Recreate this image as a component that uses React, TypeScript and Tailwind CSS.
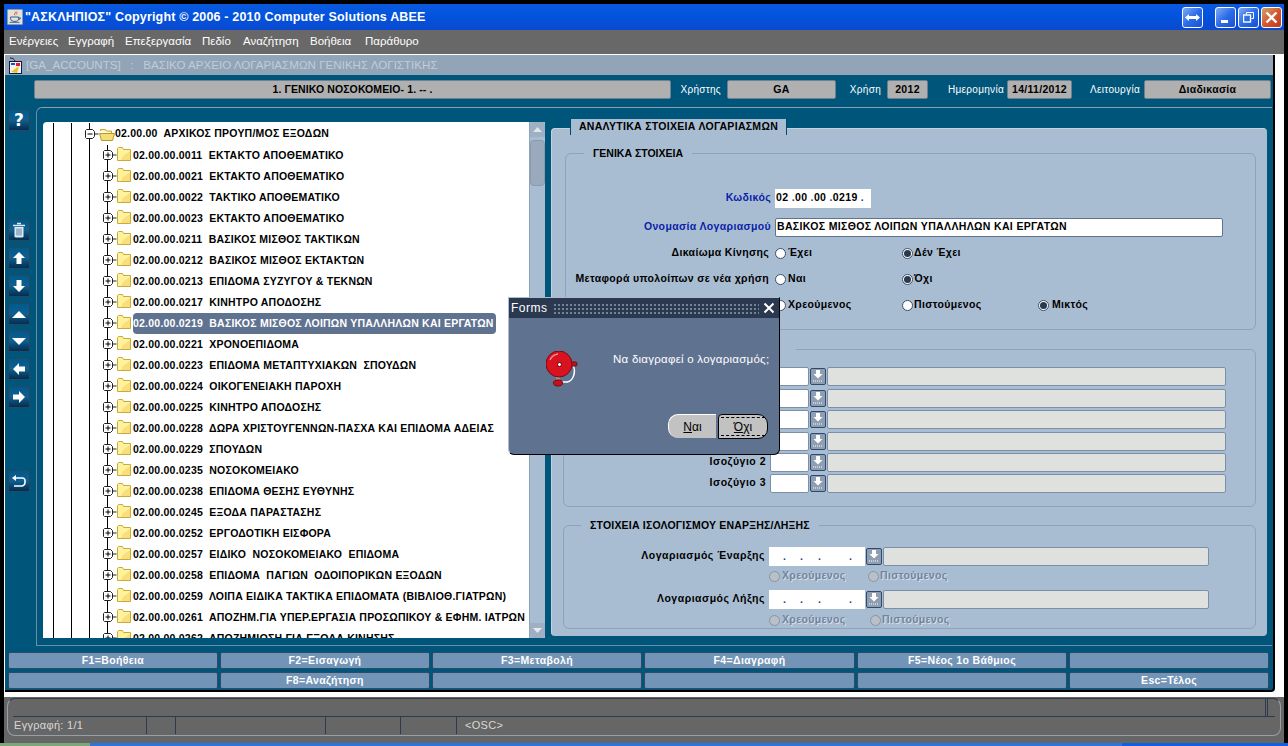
import React from "react";

const treeRows = [
  "02.00.00.0011  ΕΚΤΑΚΤΟ ΑΠΟΘΕΜΑΤΙΚΟ",
  "02.00.00.0021  ΕΚΤΑΚΤΟ ΑΠΟΘΕΜΑΤΙΚΟ",
  "02.00.00.0022  ΤΑΚΤΙΚΟ ΑΠΟΘΕΜΑΤΙΚΟ",
  "02.00.00.0023  ΕΚΤΑΚΤΟ ΑΠΟΘΕΜΑΤΙΚΟ",
  "02.00.00.0211  ΒΑΣΙΚΟΣ ΜΙΣΘΟΣ ΤΑΚΤΙΚΩΝ",
  "02.00.00.0212  ΒΑΣΙΚΟΣ ΜΙΣΘΟΣ ΕΚΤΑΚΤΩΝ",
  "02.00.00.0213  ΕΠΙΔΟΜΑ ΣΥΖΥΓΟΥ & ΤΕΚΝΩΝ",
  "02.00.00.0217  ΚΙΝΗΤΡΟ ΑΠΟΔΟΣΗΣ",
  "02.00.00.0219  ΒΑΣΙΚΟΣ ΜΙΣΘΟΣ ΛΟΙΠΩΝ ΥΠΑΛΛΗΛΩΝ ΚΑΙ ΕΡΓΑΤΩΝ",
  "02.00.00.0221  ΧΡΟΝΟΕΠΙΔΟΜΑ",
  "02.00.00.0223  ΕΠΙΔΟΜΑ ΜΕΤΑΠΤΥΧΙΑΚΩΝ  ΣΠΟΥΔΩΝ",
  "02.00.00.0224  ΟΙΚΟΓΕΝΕΙΑΚΗ ΠΑΡΟΧΗ",
  "02.00.00.0225  ΚΙΝΗΤΡΟ ΑΠΟΔΟΣΗΣ",
  "02.00.00.0228  ΔΩΡΑ ΧΡΙΣΤΟΥΓΕΝΝΩΝ-ΠΑΣΧΑ ΚΑΙ ΕΠΙΔΟΜΑ ΑΔΕΙΑΣ",
  "02.00.00.0229  ΣΠΟΥΔΩΝ",
  "02.00.00.0235  ΝΟΣΟΚΟΜΕΙΑΚΟ",
  "02.00.00.0238  ΕΠΙΔΟΜΑ ΘΕΣΗΣ ΕΥΘΥΝΗΣ",
  "02.00.00.0245  ΕΞΟΔΑ ΠΑΡΑΣΤΑΣΗΣ",
  "02.00.00.0252  ΕΡΓΟΔΟΤΙΚΗ ΕΙΣΦΟΡΑ",
  "02.00.00.0257  ΕΙΔΙΚΟ  ΝΟΣΟΚΟΜΕΙΑΚΟ  ΕΠΙΔΟΜΑ",
  "02.00.00.0258  ΕΠΙΔΟΜΑ  ΠΑΓΙΩΝ  ΟΔΟΙΠΟΡΙΚΩΝ ΕΞΟΔΩΝ",
  "02.00.00.0259  ΛΟΙΠΑ ΕΙΔΙΚΑ ΤΑΚΤΙΚΑ ΕΠΙΔΟΜΑΤΑ (ΒΙΒΛΙΟΘ.ΓΙΑΤΡΩΝ)",
  "02.00.00.0261  ΑΠΟΖΗΜ.ΓΙΑ ΥΠΕΡ.ΕΡΓΑΣΙΑ ΠΡΟΣΩΠΙΚΟΥ & ΕΦΗΜ. ΙΑΤΡΩΝ",
  "02.00.00.0262  ΑΠΟΖΗΜΙΩΣΗ ΓΙΑ ΕΞΟΔΑ ΚΙΝΗΣΗΣ",
];

const fkeys = [
  ["F1=Βοήθεια", "w-[210px]"],
  ["F2=Εισαγωγή", "w-[210px]"],
  ["F3=Μεταβολή", "w-[210px]"],
  ["F4=Διαγραφή", "w-[211px]"],
  ["F5=Νέος 1ο Βάθμιος", "w-[210px]"],
  ["", "w-[200px]"],
  ["", "w-[210px]"],
  ["F8=Αναζήτηση", "w-[210px]"],
  ["", "w-[210px]"],
  ["", "w-[211px]"],
  ["", "w-[210px]"],
  ["Esc=Τέλος", "w-[200px]"],
];

const Expander = ({ open }: { open?: boolean }) => (
  <svg width="14" height="11" viewBox="0 0 14 11" className="shrink-0 -ml-[5px]">
    <path d="M1.500 .5h6l2 2v5l-2 2h-6l-1-1v-7z" fill="#fff" stroke="#222" />
    <path d="M2.500 5h5" stroke="#000" />
    {!open && <path d="M5 2.500v5" stroke="#000" />}
    <path d="M9.500 5h4" stroke="#222" />
  </svg>
);

const Folder = ({ open }: { open?: boolean }) =>
  open ? (
    <svg width="16" height="13" viewBox="0 0 16 13" className="shrink-0">
      <path d="M1.500 3V1.500h5l1 1.500h5v2" fill="#fff3a8" stroke="#c4a635" />
      <path d="M.5 5.500h15l-2 7h-11z" fill="#f5de78" stroke="#b8982c" />
    </svg>
  ) : (
    <svg width="14" height="14" viewBox="0 0 14 14" className="shrink-0">
      <path d="M.5 3V1.500l1-1h4l1 2h7v11H.5z" fill="#fff29c" stroke="#c9ab3c" />
      <path d="M6 9l7-5v9H4z" fill="#f6d66e" opacity=".7" />
    </svg>
  );

const Guide = () => <div className="w-[18px] h-full border-l border-black shrink-0" />;

const TreePanel = () => (
  <div className="w-[502px] h-[516px] bg-white flex overflow-hidden rounded-tl-sm font-['Liberation_Sans',sans-serif] font-bold text-[10.5px] tracking-[0.22px] text-black">
    <div className="w-[486px] overflow-hidden pl-[10px] pt-[1px]">
      <div className="flex items-center h-[22px]">
        <Guide />
        <Guide />
        <div className="w-0 h-full border-l border-black" />
        <Expander open />
        <Folder open />
        <span className="whitespace-pre">02.00.00  ΑΡΧΙΚΟΣ ΠΡΟΥΠ/ΜΟΣ ΕΞΟΔΩΝ</span>
      </div>
      {treeRows.map((row) => {
        const selected = row.startsWith("02.00.00.0219");
        return (
          <div key={row} className="flex items-center h-[21px]">
            <Guide />
            <Guide />
            <Guide />
            <div className="w-0 h-full border-l border-black" />
            <Expander />
            <div className="-mt-[3px]"><Folder /></div>
            <span
              className={
                selected
                  ? "ml-[2px] h-[21px] pr-[2px] flex items-center whitespace-pre bg-[#5f7391] text-white rounded-sm"
                  : "ml-[2px] whitespace-pre"
              }
            >
              {row}
            </span>
          </div>
        );
      })}
    </div>
    {/* scrollbar */}
    <div className="w-[16px] flex flex-col bg-[#a9bdd2] border-l border-[#8fa3ba]">
      <div className="h-[15px] bg-[#9fb0c4] rounded-t-sm flex items-center justify-center">
        <svg width="9" height="5" viewBox="0 0 9 5"><path d="M4.500 0L9 5H0z" fill="#dfe6ee" /></svg>
      </div>
      <div className="h-[46px] mt-[3px] bg-[#9aa9bb] rounded-sm border border-[#8a9aad]" />
      <div className="flex-1" />
      <div className="h-[15px] bg-[#9fb0c4] rounded-b-sm flex items-center justify-center">
        <svg width="9" height="5" viewBox="0 0 9 5"><path d="M0 0h9L4.500 5z" fill="#e6ebf1" /></svg>
      </div>
    </div>
  </div>
);

const Radio = ({ on, disabled }: { on?: boolean; disabled?: boolean }) => (
  <span
    className={
      disabled
        ? "w-[11px] h-[11px] rounded-full shrink-0 bg-[#b9c0c8] border border-[#8795a6]"
        : "w-[11px] h-[11px] rounded-full shrink-0 bg-white border border-[#3c4f68] flex items-center justify-center"
    }
  >
    {on && <span className="w-[7px] h-[7px] rounded-full bg-[#2a3850]" />}
  </span>
);

const Lov = () => (
  <div className="w-[16px] h-[17px] shrink-0 bg-[#8f9fb1] border border-[#2e4a70] rounded-[2px] flex items-center justify-center">
    <svg width="10" height="12" viewBox="0 0 10 12">
      <path d="M3 0h4v4h2.500L5 8.500.5 4H3z" fill="#fff" />
      <path d="M0 11h10" stroke="#fff" strokeDasharray="1 1" />
    </svg>
  </div>
);

const LovRow = ({ label }: { label?: string }) => (
  <div className="flex items-center h-[20px]">
    <span className="w-[202px] text-right tracking-[0.5px]">{label}</span>
    <div className="ml-[4px] w-[39px] h-[19px] bg-white border border-[#7b90a8] rounded-[2px]" />
    <div className="ml-[1px]"><Lov /></div>
    <div className="ml-[1px] w-[399px] h-[19px] bg-[#dfe1de] border border-[#7b90a8] rounded-[2px]" />
  </div>
);

const DottedField = () => (
  <div className="ml-[4px] w-[96px] h-[19px] bg-white text-[#24408a] relative">
    <span className="absolute left-[14px] top-[2px]">.</span>
    <span className="absolute left-[31px] top-[2px]">.</span>
    <span className="absolute left-[49px] top-[2px]">.</span>
    <span className="absolute left-[80px] top-[2px]">.</span>
  </div>
);

const BalanceRow = ({ label }: { label: string }) => (
  <div className="flex items-center h-[20px]">
    <span className="w-[201px] text-right tracking-[0.5px]">{label}</span>
    <DottedField />
    <div className="ml-[1px]"><Lov /></div>
    <div className="ml-[1px] w-[326px] h-[19px] bg-[#dfe1de] border border-[#7b90a8] rounded-[2px]" />
  </div>
);

const DisabledRadios = ({ second }: { second: string }) => (
  <div className="flex items-center h-[14px] text-[#71859d] [text-shadow:1px_1px_0_#d7dfe8]">
    <div className="ml-[205px] w-[99px] flex items-center gap-[2px]">
      <Radio disabled />
      <span>Χρεούμενος</span>
    </div>
    <div className={second + " flex items-center gap-[1px]"}>
      <Radio disabled />
      <span>Πιστούμενος</span>
    </div>
  </div>
);

const FormPanel = () => (
  <div className="w-[716px] h-[508px] bg-[#a9bdd2] rounded-sm border-t border-l border-[#c4d2e0] font-['Liberation_Sans',sans-serif] font-bold text-[10.5px] tracking-[0.35px] text-black pl-[13px] pr-[11px]">
    <fieldset className="mt-[17px] h-[184px] border border-[#8ea2b9] rounded-md">
      <legend className="ml-[18px] px-[9px] h-[14px] leading-[14px] tracking-[0px]">ΓΕΝΙΚΑ ΣΤΟΙΧΕΙΑ</legend>
      <div className="flex flex-col mt-[28px]">
        <div className="flex items-center h-[20px]">
          <span className="w-[205px] text-right text-[#0a1fa8]">Κωδικός</span>
          <div className="ml-[4px] w-[96px] h-[19px] bg-white flex items-center pl-[1px] whitespace-pre">
            02<span className="text-[#24408a]"> .</span>00<span className="text-[#24408a]"> .</span>00<span className="text-[#24408a]"> .</span>0219<span className="text-[#24408a]"> .</span>
          </div>
        </div>
        <div className="flex items-center h-[20px] mt-[9px]">
          <span className="w-[205px] text-right text-[#0a1fa8]">Ονομασία Λογαριασμού</span>
          <div className="ml-[4px] w-[448px] h-[19px] bg-white border border-[#5f7391] rounded-[2px] flex items-center pl-[1px]">
            ΒΑΣΙΚΟΣ ΜΙΣΘΟΣ ΛΟΙΠΩΝ ΥΠΑΛΛΗΛΩΝ ΚΑΙ ΕΡΓΑΤΩΝ
          </div>
        </div>
        <div className="flex items-center h-[20px] mt-[6px]">
          <span className="w-[205px] pr-[2px] text-right">Δικαίωμα Κίνησης</span>
          <div className="ml-[4px] w-[127px] flex items-center gap-[2px]"><Radio /><span>Έχει</span></div>
          <div className="flex items-center gap-[1px]"><Radio on /><span>Δέν Έχει</span></div>
        </div>
        <div className="flex items-center h-[20px] mt-[6px]">
          <span className="w-[205px] pr-[2px] text-right">Μεταφορά υπολοίπων σε νέα χρήση</span>
          <div className="ml-[4px] w-[127px] flex items-center gap-[2px]"><Radio /><span>Ναι</span></div>
          <div className="flex items-center gap-[1px]"><Radio on /><span>Όχι</span></div>
        </div>
        <div className="flex items-center h-[20px] mt-[6px]">
          <div className="ml-[209px] w-[127px] flex items-center gap-[2px]"><Radio /><span>Χρεούμενος</span></div>
          <div className="w-[136px] flex items-center gap-[1px]"><Radio /><span>Πιστούμενος</span></div>
          <div className="flex items-center gap-[3px]"><Radio on /><span>Μικτός</span></div>
        </div>
      </div>
    </fieldset>

    <fieldset className="-ml-[2px] mt-[12px] h-[165px] w-[693px] border border-[#8ea2b9] rounded-md">
      <legend className="ml-[17px] w-[215px] h-[14px]" />
      <div className="flex flex-col mt-[10px]">
        <LovRow />
        <div className="mt-[2px]"><LovRow /></div>
        <div className="mt-[1px]"><LovRow /></div>
        <div className="mt-[2px]"><LovRow /></div>
        <div className="mt-[1px]"><LovRow label="Ισοζύγιο 2" /></div>
        <div className="mt-[1px]"><LovRow label="Ισοζύγιο 3" /></div>
      </div>
    </fieldset>

    <fieldset className="-ml-[2px] mt-[11px] h-[111px] w-[693px] border border-[#8ea2b9] rounded-md">
      <legend className="ml-[17px] px-[9px] h-[14px] leading-[14px] tracking-[0.2px]">ΣΤΟΙΧΕΙΑ ΙΣΟΛΟΓΙΣΜΟΥ ΕΝΑΡΞΗΣ/ΛΗΞΗΣ</legend>
      <div className="flex flex-col mt-[14px]">
        <BalanceRow label="Λογαριασμός Έναρξης" />
        <div className="mt-[3px]"><DisabledRadios second="" /></div>
        <div className="mt-[6px]"><BalanceRow label="Λογαριασμός Λήξης" /></div>
        <div className="mt-[4px]"><DisabledRadios second="ml-[2px]" /></div>
      </div>
    </fieldset>
  </div>
);

const toolIcons: Record<string, React.ReactNode> = {
  trash: (
    <svg width="12" height="16" viewBox="0 0 12 16" fill="none">
      <path d="M4 1.500h4M0 3.500h12" stroke="#dfe9f2" strokeWidth="1.500" />
      <path d="M1.500 5h9v9.500l-1 1h-7l-1-1z" fill="#dfe9f2" />
      <path d="M4 6.500v7M6 6.500v7M8 6.500v7" stroke="#5d7f9c" />
    </svg>
  ),
  up: <svg width="12" height="12" viewBox="0 0 12 12"><path d="M6 0l6 6H8.500v6h-5V6H0z" fill="#fff" /></svg>,
  down: <svg width="12" height="12" viewBox="0 0 12 12"><path d="M3.500 0h5v6H12l-6 6-6-6h3.500z" fill="#fff" /></svg>,
  prev: <svg width="14" height="7" viewBox="0 0 14 7"><path d="M7 0l7 7H0z" fill="#fff" /></svg>,
  next: <svg width="14" height="7" viewBox="0 0 14 7"><path d="M0 0h14L7 7z" fill="#fff" /></svg>,
  left: <svg width="12" height="12" viewBox="0 0 12 12"><path d="M0 6l6-6v3.500h6v5H6V12z" fill="#fff" /></svg>,
  right: <svg width="12" height="12" viewBox="0 0 12 12"><path d="M12 6L6 0v3.500H0v5h6V12z" fill="#fff" /></svg>,
  undo: (
    <svg width="14" height="13" viewBox="0 0 14 13" fill="none">
      <path d="M3 3h7.500a2.500 2.500 0 0 1 2.500 2.500v2A3.500 3.500 0 0 1 9.500 11H2" stroke="#fff" strokeWidth="1.600" />
      <path d="M0 3l4-3v6z" fill="#fff" />
    </svg>
  ),
};

const ToolButton = ({ icon, className }: { icon: React.ReactNode; className?: string }) => (
  <div className={"w-[22px] h-[22px] rounded-[2px] border border-[#2c4660] bg-gradient-to-b from-[#005a8c] via-[#0f5f90] to-[#032f52] flex items-center justify-center " + (className || "")}>
    {icon}
  </div>
);

const Toolbar = () => (
  <div className="w-[31px] shrink-0 pl-[3px] pt-[2px] flex flex-col">
    <ToolButton icon={<span className="text-white font-bold text-[17px] leading-none font-['DejaVu_Sans',sans-serif]">?</span>} />
    <ToolButton icon={toolIcons.trash} className="mt-[88px]" />
    <ToolButton icon={toolIcons.up} className="mt-[6px]" />
    <ToolButton icon={toolIcons.down} className="mt-[6px]" />
    <ToolButton icon={toolIcons.prev} className="mt-[6px]" />
    <ToolButton icon={toolIcons.next} className="mt-[5px]" />
    <ToolButton icon={toolIcons.left} className="mt-[6px]" />
    <ToolButton icon={toolIcons.right} className="mt-[6px]" />
    <ToolButton icon={toolIcons.undo} className="mt-[62px]" />
  </div>
);

const HeaderField = ({ w, children }: { w: string; children: React.ReactNode }) => (
  <div className={w + " h-[19px] bg-[#b0b0b0] border border-[#6d7f90] rounded-[2px] flex items-center justify-center font-bold text-[10.5px] text-black"}>
    {children}
  </div>
);

const HeaderRow = () => (
  <div className="h-[25px] pt-[5px] pl-[29px] flex font-['Liberation_Sans',sans-serif] text-[10px] tracking-[0.3px] text-white">
    <HeaderField w="w-[637px] tracking-[0.1px]">1. ΓΕΝΙΚΟ ΝΟΣΟΚΟΜΕΙΟ- 1. -- .</HeaderField>
    <span className="w-[56px] pr-[6px] text-right leading-[19px]">Χρήστης</span>
    <HeaderField w="w-[109px]">GA</HeaderField>
    <span className="w-[51px] pr-[6px] text-right leading-[19px]">Χρήση</span>
    <HeaderField w="w-[41px]">2012</HeaderField>
    <span className="w-[79px] pr-[3px] text-right leading-[19px]">Ημερομηνία</span>
    <HeaderField w="w-[65px]">14/11/2012</HeaderField>
    <span className="w-[72px] pr-[4px] text-right leading-[19px]">Λειτουργία</span>
    <HeaderField w="w-[127px]">Διαδικασία</HeaderField>
  </div>
);

const Bell = () => (
  <svg width="34" height="36" viewBox="0 0 34 36">
    <path d="M27 14c3 6 1 16-6 17h-6" fill="none" stroke="#fff" strokeWidth="1.500" />
    <rect x="10" y="26" width="4" height="5" fill="#a08a8a" />
    <ellipse cx="12" cy="32" rx="4.500" ry="3" fill="#c8101a" stroke="#6a0a10" />
    <rect x="25" y="11" width="6" height="4" rx="1.500" fill="#c8101a" stroke="#6a0a10" />
    <circle cx="13" cy="13" r="13" fill="#d8121e" stroke="#7a0a12" />
    <path d="M4 9a10 10 0 0 1 8-6" fill="none" stroke="#f78a8f" strokeWidth="1.500" />
    <circle cx="13.500" cy="13.500" r="2" fill="#fff" stroke="#600" />
  </svg>
);

const Dialog = () => (
  <div className="absolute left-[508px] top-[297px] w-[272px] h-[158px] bg-[#5f7391] border-t border-l border-[#aebccb] border-r border-b border-r-black border-b-black rounded-br-md rounded-bl-md font-['Liberation_Sans',sans-serif] text-white">
    <div className="h-[20px] bg-[#2a3850] flex items-center pl-[2px] pr-[4px]">
      <span className="text-[12px] tracking-[0.5px]">Forms</span>
      <div className="ml-[5px] flex-1 h-[11px] bg-[radial-gradient(#76849a_1px,transparent_1px)] bg-[length:4px_4px]" />
      <svg width="12" height="12" viewBox="0 0 12 12" className="ml-[4px]"><path d="M1.500 1.500l9 9M10.500 1.500l-9 9" stroke="#fff" strokeWidth="2" /></svg>
    </div>
    <div className="flex pl-[37px] pt-[33px]">
      <Bell />
      <span className="ml-[33px] mt-[1px] text-[11.5px] tracking-[0.25px] leading-[14px] whitespace-pre">Να διαγραφεί ο λογαριασμός;</span>
    </div>
    <div className="flex justify-end pr-[11px] gap-[2px] mt-[27px] text-[12px] text-black">
      <div className="w-[48px] h-[24px] bg-[#c2c2c2] rounded-l-[10px] border-l border-t border-white flex items-center justify-center"><span className="underline">Ν</span>αι</div>
      <div className="w-[50px] h-[25px] bg-[#c2c2c2] rounded-r-[10px] rounded-tl-sm border border-black flex items-center justify-center">
        <div className="w-[44px] h-[19px] border-y border-dashed border-black flex items-center justify-center"><span className="underline">Ό</span>χι</div>
      </div>
    </div>
  </div>
);

const TitleButton = ({ red, children }: { red?: boolean; children: React.ReactNode }) => (
  <div className={(red ? "bg-gradient-to-br from-[#c9a36c] via-[#d8562f] to-[#b83c22]" : "bg-gradient-to-br from-[#82a9ee] via-[#2a6cea] to-[#1b51d2]") + " w-[21px] h-[21px] rounded-[3px] border border-white flex items-center justify-center"}>
    {children}
  </div>
);

const TitleBar = () => (
  <div className="h-[26px] bg-gradient-to-b from-[#0a5ae0] via-[#0352dc] to-[#0a4ad0] flex items-center pl-[3px] pr-[2px] text-white">
    <svg width="16" height="16" viewBox="0 0 18 18" className="shrink-0">
      <rect x=".5" y=".5" width="17" height="17" rx="1" fill="#e4e2d6" stroke="#9a9a90" />
      <path d="M9 3c2 1-2 2 0 4M11 3c1 1-1 2 0 3" stroke="#d8431e" fill="none" />
      <path d="M4 9h9v2c0 2-2 3-4 3s-5-1-5-3zM13 10h2v1l-2 1" fill="none" stroke="#2a5a9a" strokeWidth="1.100" />
      <path d="M3 15h11" stroke="#2a5a9a" />
    </svg>
    <span className="ml-[2px] font-['Liberation_Sans',sans-serif] font-bold text-[12.5px] tracking-[0.17px] whitespace-pre">"ΑΣΚΛΗΠΙΟΣ" Copyright © 2006 - 2010 Computer Solutions ABEE</span>
    <div className="flex-1" />
    <TitleButton>
      <svg width="15" height="7" viewBox="0 0 15 7"><path d="M0 3.500L4 0v2h7V0l4 3.500L11 7V5H4v2z" fill="#fff" /></svg>
    </TitleButton>
    <div className="w-[12px]" />
    <div className="flex gap-[2px]">
      <TitleButton><div className="w-[7px] h-[3px] bg-white mt-[9px] -ml-[2px]" /></TitleButton>
      <TitleButton>
        <svg width="11" height="11" viewBox="0 0 11 11" fill="none" stroke="#fff"><path d="M3.500 2.500V.5h7v6h-2" /><rect x=".5" y="3" width="7" height="7" strokeWidth="1.400" /></svg>
      </TitleButton>
      <TitleButton red>
        <svg width="13" height="13" viewBox="0 0 13 13"><path d="M1.500 1.500l10 10M11.500 1.500l-10 10" stroke="#fff" strokeWidth="2.400" /></svg>
      </TitleButton>
    </div>
  </div>
);

const menus = [
  ["Ενέργειες", "w-[59px]"],
  ["Εγγραφή", "w-[57px]"],
  ["Επεξεργασία", "w-[77px]"],
  ["Πεδίο", "w-[41px]"],
  ["Αναζήτηση", "w-[67px]"],
  ["Βοήθεια", "w-[55px]"],
  ["Παράθυρο", "w-[60px]"],
];

const StatusBar = () => (
  <div className="h-[46px] pt-[1px] bg-[#666666] font-['Liberation_Sans',sans-serif] text-[11px] tracking-[0.3px] text-[#d8d8d8] flex items-start">
    <div className="ml-[3px] mr-[3px] h-[38px] flex-1 border-t border-l border-r border-b border-t-[#2f3a4a] border-l-[#97a0a8] border-r-[#97a0a8] border-b-[#97a0a8] rounded-[8px] flex flex-col">
      <div className="h-[18px] flex justify-end pr-[7px] border-b border-[#2f3a4a] ml-[5px] mr-[5px]">
        <div className="w-[3px] h-full border-x border-[#2f3a4a]" />
      </div>
      <div className="flex items-center h-[17px] ml-[6px]">
        <span className="w-[132px]">Εγγραφή: 1/1</span>
        <div className="w-[29px] h-full border-l border-[#2f3a4a]" />
        <div className="w-[150px] h-full border-l border-[#2f3a4a]" />
        <div className="w-[75px] h-full border-l border-[#2f3a4a]" />
        <div className="w-[56px] h-full border-l border-[#2f3a4a]" />
        <div className="h-full border-l border-[#2f3a4a] pl-[8px] flex items-center">&lt;OSC&gt;</div>
      </div>
    </div>
  </div>
);

export default function App() {
  return (
    <div className="relative w-[1288px] h-[746px] bg-black overflow-hidden pt-[4px]">
      <div className="mx-[4px]">
        <TitleBar />
        <div className="h-[24px] bg-[#686868] flex items-center pl-[5px] font-['Liberation_Sans',sans-serif] text-[11.5px] text-white">
          {menus.map(([m, w]) => (
            <span key={m} className={w}>{m}</span>
          ))}
        </div>
        <div className="h-[643px] bg-white pt-[1px] pl-[1px]">
          <div className="w-[1270px] h-[637px] border-r-2 border-b-2 border-black bg-[#00557a] rounded-br-sm flex flex-col">
            <div className="h-[20px] bg-[#92a5b8] flex items-center pl-[1px] font-['Liberation_Sans',sans-serif] text-[11.6px] text-[#c0ccd8] whitespace-pre">
              <svg width="17" height="17" viewBox="0 0 17 17" className="shrink-0">
                <path d="M4 1c3 0 4 1 5 3" stroke="#222" fill="none" />
                <rect x="3" y="4" width="13" height="13" fill="#101848" />
                <path d="M4 5h11v11H4z" fill="#f4f4f4" />
                <path d="M5 6h4v2H5z" fill="#2050c0" />
                <path d="M10 6h4v3h-4z" fill="#e02020" />
                <path d="M5 15l8-6-2 7z" fill="#e8c020" />
              </svg>
              <span className="ml-[3px]">[GA_ACCOUNTS]   :   ΒΑΣΙΚΟ ΑΡΧΕΙΟ ΛΟΓΑΡΙΑΣΜΩΝ ΓΕΝΙΚΗΣ ΛΟΓΙΣΤΙΚΗΣ</span>
            </div>
            <HeaderRow />
            <div className="flex h-[539px] mt-[7px]">
              <Toolbar />
              <div className="w-[1236px] h-[539px] border-t border-l border-b border-[#6f8da5] rounded-tl-md pl-[6px] pt-[14px] flex gap-[6px] border-t-[#8aa0b3]">
                <TreePanel />
                <div className="-mt-[3px] flex flex-col">
                  <div className="relative ml-[19px] w-[217px] h-[16px] -mb-[7px] bg-[#a9bdd2] border-x border-[#004a6e] flex items-center justify-center font-['Liberation_Sans',sans-serif] font-bold text-[10.5px] tracking-[0.3px] text-black">
                    ΑΝΑΛΥΤΙΚΑ ΣΤΟΙΧΕΙΑ ΛΟΓΑΡΙΑΣΜΩΝ
                  </div>
                  <FormPanel />
                </div>
              </div>
            </div>
            <div className="ml-[3px] mt-[6px] grid grid-cols-[210px_210px_210px_211px_210px_200px] gap-x-[2px] gap-y-[3px] font-['Liberation_Sans',sans-serif] font-bold text-[10.5px] tracking-[0.35px] text-white">
              {fkeys.map(([label, w], i) => (
                <div key={i} className={w + " h-[17px] bg-[#7294b7] border border-[#2d4a66] rounded-[2px] flex items-center justify-center"}>
                  {label}
                </div>
              ))}
            </div>
          </div>
        </div>
        <StatusBar />
      </div>
      <div className="flex h-[3px]">
        <div className="w-[90px] bg-[#7aa878]" />
        <div className="w-[1032px] bg-[#2f74de]" />
        <div className="flex-1 bg-[#0f5fe0]" />
      </div>
      <Dialog />
    </div>
  );
}
